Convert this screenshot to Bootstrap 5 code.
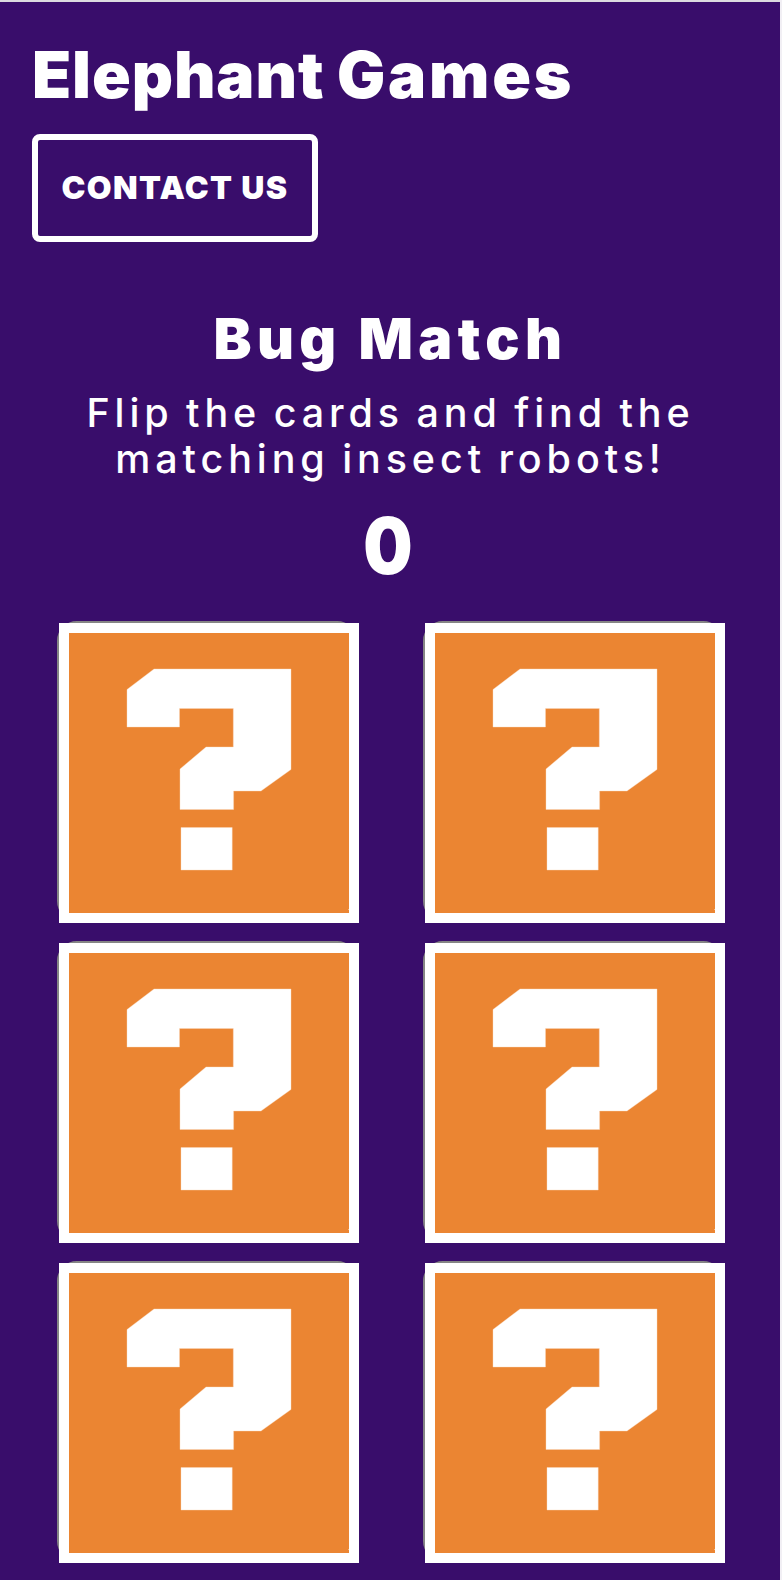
<!DOCTYPE html>
<html lang="en">
<head>
<meta charset="utf-8">
<meta name="viewport" content="width=device-width, initial-scale=1">
<title>Elephant Games</title>
<link href="https://cdn.jsdelivr.net/npm/bootstrap@5.3.0/dist/css/bootstrap.min.css" rel="stylesheet">
<style>
body{background:#f1eff4;font-family:Inter,"Open Sans",sans-serif;color:#fff;overflow:hidden}
.page-shell{width:780px;height:1580px;background:#390d6b;border-top:2px solid #dcdae0}
.site-head{padding:33px 32px 0}
.brand-title{font-size:64px;font-weight:900;line-height:80px;letter-spacing:.9px;word-spacing:-1px;margin-bottom:19px;white-space:nowrap}
.brand-title span{letter-spacing:2.8px}
.btn-contact,.btn-contact:hover{width:286px;height:108px;border:6px solid #fff;border-radius:8px;color:#fff;font-size:32px;font-weight:900;line-height:1;letter-spacing:1.4px;padding:0;white-space:nowrap}
.game-intro{padding-top:62px;width:776px}
.game-name{font-size:57px;font-weight:900;line-height:70px;letter-spacing:5.4px;word-spacing:0;margin:0 0 16px;padding-left:5px}
.game-help{font-size:39.5px;font-weight:500;line-height:46px;letter-spacing:4.9px;word-spacing:-3px;margin:0 0 18px;padding-left:5px;white-space:nowrap}
.score{font-size:79px;font-weight:900;line-height:90px;margin:0 0 33px}
.score span{display:inline-block;transform:scaleX(.88)}
.board{display:grid;grid-template-columns:300px 300px;column-gap:66px;row-gap:20px;margin-left:59px}
.tile{position:relative;width:300px;height:300px;padding:0;border:0;background:none}
.tile::before{content:"";position:absolute;left:-2px;top:-2px;width:300px;height:300px;border:2px solid #858585;border-radius:20px}
.tile svg{position:relative;display:block}
</style>
<script src="https://cdn.jsdelivr.net/npm/bootstrap@5.3.0/dist/js/bootstrap.bundle.min.js"></script>
</head>
<body>
<svg width="0" height="0" class="d-none">
<symbol id="card-back" viewBox="0 0 300 300">
<path fill="#fff" d="M0 0h300v300H0z"/><path fill="#eb8532" d="M10 10h280v280H10z"/>
<path fill="#fff" stroke="#f9d9bd" stroke-width=".4" d="M95 46H232V146.500L202 168H174.600V186.500H121V146L147 124H174.300V85.500H120.500V104H68V66.500zM122 204.500h51.200v42.500H122z"/>
<path fill="#f5bd85" d="M289 286h1v1h-1z"/>
</symbol>
</svg>
<div class="page-shell">
<header class="site-head">
<h1 class="brand-title">Elephant <span>Games</span></h1>
<button class="btn btn-contact d-flex align-items-center justify-content-center" type="button">CONTACT US</button>
</header>
<main>
<section class="game-intro text-center">
<h2 class="game-name">Bug Match</h2>
<p class="game-help">Flip the cards and find the<br>matching insect robots!</p>
<p class="score"><span>0</span></p>
</section>
<section class="board">
<button class="tile" aria-label="Card 1"><svg width="300" height="300"><use href="#card-back"/></svg></button>
<button class="tile" aria-label="Card 2"><svg width="300" height="300"><use href="#card-back"/></svg></button>
<button class="tile" aria-label="Card 3"><svg width="300" height="300"><use href="#card-back"/></svg></button>
<button class="tile" aria-label="Card 4"><svg width="300" height="300"><use href="#card-back"/></svg></button>
<button class="tile" aria-label="Card 5"><svg width="300" height="300"><use href="#card-back"/></svg></button>
<button class="tile" aria-label="Card 6"><svg width="300" height="300"><use href="#card-back"/></svg></button>
</section>
</main>
</div>
</body>
</html>
